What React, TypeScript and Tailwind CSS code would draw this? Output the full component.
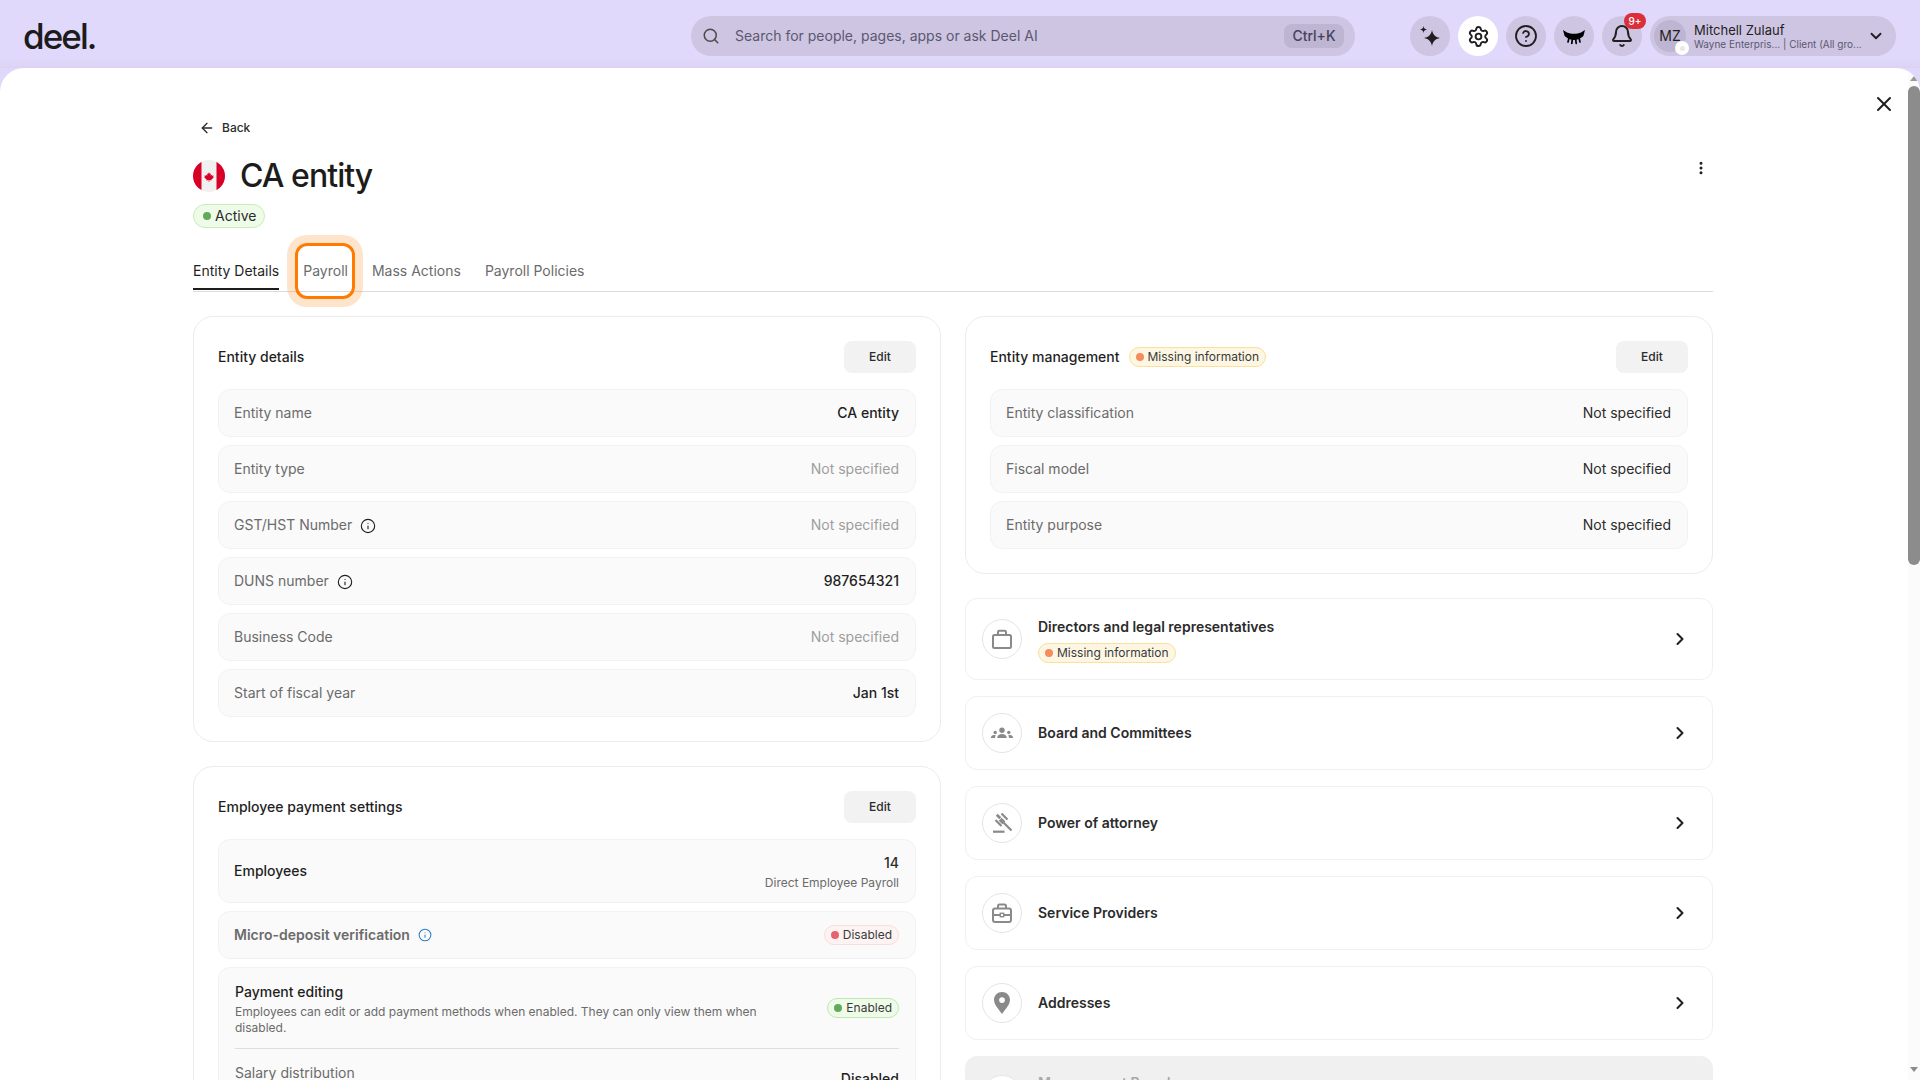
import React from "react";
import { ArrowLeft, X, EllipsisVertical, ChevronRight, ChevronDown, Search, Settings, CircleHelp, Bell, Info } from "lucide-react";

function Dot({ c }: { c: string }) {
  return <span className={`h-2 w-2 shrink-0 rounded-full ${c}`} />;
}

function MissingBadge() {
  return (
    <span className="inline-flex h-5 items-center gap-[4px] rounded-full border border-[#fbe09a] bg-[#fdf6e3] px-[6px] text-xs text-[#3a3a3a]">
      <span className="h-2 w-2 shrink-0 rounded-full bg-[#f58b5e]" />
      Missing information
    </span>
  );
}

function Row({ label, value, tone = "dark", info }: { label: string; value: string; tone?: "dark" | "dim" | "strong"; info?: boolean }) {
  return (
    <div className="flex h-12 items-center justify-between rounded-xl border border-[#f2f2f2] bg-[#fafafa] pl-[15px] pr-4 text-sm">
      <span className="flex items-center gap-2 text-[#6b6b6b]">
        {label}
        {info && <Info size={16} strokeWidth={1.7} className="mt-px text-[#222222]" />}
      </span>
      <span className={tone === "dim" ? "text-[#9e9e9e]" : tone === "strong" ? "font-medium text-[#1f1f1f]" : "text-[#2b2b2b]"}>{value}</span>
    </div>
  );
}

function EditButton() {
  return (
    <button className="h-8 w-[72px] rounded-lg bg-[#f2f2f2] text-xs font-medium text-[#2b2b2b]">Edit</button>
  );
}

function Case() {
  return (
    <svg width="24" height="24" viewBox="0 0 24 24" fill="none" stroke="#8a8a8a" strokeWidth="2">
      <rect x="3" y="8" width="18" height="13" rx="1.500" />
      <path d="M8 8V5c0-.8.5-1.300 1.300-1.300h5.400c.8 0 1.300.5 1.300 1.300v3" />
    </svg>
  );
}

function Board() {
  return (
    <svg width="24" height="24" viewBox="0 0 24 24" fill="#8a8a8a">
      <g transform="translate(0 1)">
        <circle cx="12" cy="8.200" r="2.700" />
        <path d="M7.200 16c.2-2.600 2-3.900 4.800-3.900s4.600 1.300 4.800 3.900z" />
        <circle cx="5.200" cy="10.500" r="1.700" />
        <path d="M.8 16c.2-1.900 1.300-3 3.200-3 .7 0 1.200.1 1.700.3-.4.800-.6 1.700-.7 2.700z" />
        <circle cx="18.800" cy="10.500" r="1.700" />
        <path d="M23.200 16c-.2-1.900-1.300-3-3.200-3-.7 0-1.200.1-1.700.3.4.8.6 1.700.7 2.700z" />
      </g>
    </svg>
  );
}

function Gavel() {
  return (
    <svg width="24" height="24" viewBox="0 0 24 24" fill="none" stroke="#8a8a8a" strokeWidth="2.200" strokeLinecap="butt">
      <path d="M11.500 2.500l6 6" />
      <path d="M5.500 9l6 6" />
      <path d="M9.500 4.500L7.500 6.500M13.500 8.500l-3 3" strokeWidth="5" />
      <path d="M13 11l8.500 8.500" />
      <path d="M3 20.700h11.500" />
    </svg>
  );
}

function Toolbox() {
  return (
    <svg width="24" height="24" viewBox="0 0 24 24" fill="none" stroke="#8a8a8a" strokeWidth="2">
      <rect x="3" y="7.500" width="18" height="13.500" rx="2" />
      <path d="M8 7.500V5c0-.9.600-1.500 1.500-1.500h5c.9 0 1.500.6 1.500 1.500v2.500" />
      <path d="M3 14h7M14 14h7" />
      <rect x="10.300" y="12.300" width="3.400" height="3.400" strokeWidth="1.400" />
    </svg>
  );
}

function Pin() {
  return (
    <svg width="24" height="24" viewBox="0 0 24 24" fill="#8a8a8a">
      <path fillRule="evenodd" d="M12 1C7.500 1 4 4.400 4 8.800c0 5 4.800 9.700 8 14.200 3.200-4.500 8-9.200 8-14.200C20 4.400 16.500 1 12 1zm0 5.200a2.900 2.900 0 1 1 0 5.800 2.900 2.900 0 0 1 0-5.800z" />
    </svg>
  );
}

function ListCard({ title, icon, missing, disabled }: { title: string; icon: React.ReactNode; missing?: boolean; disabled?: boolean }) {
  return (
    <div className={`flex items-center gap-4 rounded-xl border border-[#f0f0f0] px-4 ${disabled ? "bg-[#f0f0f0] pb-4 pt-[14px]" : "bg-white py-4"}`}>
      <div className="flex h-10 w-10 shrink-0 items-center justify-center rounded-full border border-[#e5e5e5] bg-white">{icon}</div>
      <div className="flex min-w-0 flex-1 flex-col items-start gap-1">
        <span className={`text-sm font-semibold leading-6 ${disabled ? "text-[#a8a8a8]" : "text-[#2b2b2b]"}`}>{title}</span>
        {missing && <MissingBadge />}
      </div>
      <ChevronRight size={20} strokeWidth={2.500} className="mr-[6px] text-[#222222]" />
    </div>
  );
}

function RoundIcon({ children, white }: { children: React.ReactNode; white?: boolean }) {
  return (
    <div className={`relative flex h-10 w-10 items-center justify-center rounded-full ${white ? "bg-white" : "bg-[#cdc5e2]"}`}>{children}</div>
  );
}

function Sparkle() {
  return (
    <svg width="26" height="26" viewBox="0 0 26 26" fill="#1f1f1f">
      <path d="M15 7c1 4.700 2.900 6.800 8 8-5.100 1.200-7 3.300-8 8-1-4.700-2.900-6.800-8-8 5.100-1.200 7-3.300 8-8z" />
      <path d="M6.500 3c.4 2.200 1.200 3 3.500 3.500C7.700 7 6.900 7.800 6.500 10c-.4-2.200-1.200-3-3.500-3.500C5.300 6 6.100 5.200 6.500 3z" />
    </svg>
  );
}

function ClosedEye() {
  return (
    <svg width="24" height="24" viewBox="0 0 24 24" fill="#000000" stroke="#000000" strokeWidth="0">
      <path d="M1 6l4 2.500c4 1.700 10 1.700 14 0L23 6l-1.600 6c-3 2.800-6 4-9.400 4s-6.400-1.200-9.400-4z" />
      <path d="M7 14L6 18M10.300 15.300L9.800 19.300M13.700 15.300l.5 4M17 14l1 4" fill="none" strokeWidth="1.700" strokeLinecap="round" />
    </svg>
  );
}

function Flag() {
  return (
    <svg width="32" height="32" viewBox="0 0 32 32" className="shrink-0">
      <defs>
        <clipPath id="flagclip"><circle cx="16" cy="16" r="16" /></clipPath>
      </defs>
      <g clipPath="url(#flagclip)">
        <rect width="32" height="32" fill="#f0f0f0" />
        <rect width="8.500" height="32" fill="#d80027" />
        <rect x="23.500" width="8.500" height="32" fill="#d80027" />
        <g transform="translate(16 16.500) scale(0.78) translate(-16 -16)">
          <path d="M16 10.500l1.300 2.300 1.300-.7-.6 3 1.600-1.200.5 1.200 1.800-.3-.6 1.900.9.500-3.200 2.600.4 1.200-3-.4v2.400h-.8v-2.400l-3 .4.400-1.200-3.200-2.600.9-.5-.6-1.900 1.800.3.500-1.200 1.600 1.200-.6-3 1.300.7z" fill="#d80027" />
        </g>
      </g>
    </svg>
  );
}

export default function App() {
  return (
    <div className="flex h-screen w-full flex-col overflow-hidden bg-[#e0d8fa] font-[Inter,sans-serif] text-[#1f1f1f]">
      <header className="relative flex h-[68px] shrink-0 items-start bg-[linear-gradient(to_bottom,#e1d9fb_0%,#e1d9fb_85%,#dcd3f4_100%)] pl-[23px] pr-6 pt-4">
        <div className="flex h-10 w-[668px] items-center text-[35px] font-medium leading-none tracking-[-0.055em] text-[#1c1c1c]">deel.</div>
        <div className="flex h-10 w-[664px] items-center rounded-full bg-[#cdc5e2] pl-[11px] pr-[11px]">
          <Search size={18} strokeWidth={2} className="text-[#4a4a4a]" />
          <span className="ml-[15px] flex-1 text-sm text-[#5c5870]">Search for people, pages, apps or ask Deel AI</span>
          <span className="flex h-6 w-[60px] items-center justify-center rounded-lg bg-[#bdb5d2] text-sm font-medium text-[#45425a]">Ctrl+K</span>
        </div>
        <div className="ml-[55px] flex items-center gap-2">
          <RoundIcon><Sparkle /></RoundIcon>
          <RoundIcon white><Settings size={23} strokeWidth={2} className="text-[#1f1f1f]" /></RoundIcon>
          <RoundIcon><CircleHelp size={24} strokeWidth={1.8} className="text-[#1f1f1f]" /></RoundIcon>
          <RoundIcon><ClosedEye /></RoundIcon>
          <RoundIcon>
            <Bell size={24} strokeWidth={2} className="text-[#1f1f1f]" />
            <span className="absolute left-[22px] top-[-3px] flex h-4 w-[22px] items-center justify-center rounded-full bg-[#dc2f3c] text-[10px] font-medium text-white">9+</span>
          </RoundIcon>
          <div className="flex h-10 w-[246px] items-center rounded-full bg-[#cdc5e2] pl-1 pr-[11px]">
            <div className="relative flex h-8 w-8 shrink-0 items-center justify-center rounded-full bg-[#bdb5d2] text-sm text-[#1f1f1f]">
              MZ
              <span className="absolute left-[21px] top-[21px] flex h-[14px] w-[14px] items-center justify-center rounded-full bg-white">
                <span className="h-[5px] w-[5px] rounded-full bg-[#e8e8e8]" />
              </span>
            </div>
            <div className="ml-2 flex min-w-0 flex-1 flex-col justify-center leading-none">
              <span className="text-[13px] leading-4 text-[#1f1f1f]">Mitchell Zulauf</span>
              <span className="-mt-px whitespace-nowrap text-[10px] leading-[14px] text-[#5c5870]">Wayne Enterpris... | Client (All gro...</span>
            </div>
            <ChevronDown size={18} strokeWidth={2.500} className="text-[#1f1f1f]" />
          </div>
        </div>
      </header>

      <div className="flex h-[1012px] overflow-hidden rounded-t-[24px] bg-white">
        <main className="relative min-w-0 flex-1 pl-[193px] pt-[48px]">
          <X size={24} strokeWidth={2} className="absolute left-[1872px] top-[24px] text-[#1f1f1f]" />
          <EllipsisVertical size={16} strokeWidth={2.500} className="absolute left-[1693px] top-[92px] text-[#1f1f1f]" />
          <div className="w-[1520px]">
            <div className="flex h-6 items-center pl-[6px] text-xs font-medium text-[#2b2b2b]">
              <ArrowLeft size={16} strokeWidth={2} className="mr-[7px]" />
              Back
            </div>
            <div className="mt-5 flex h-8 items-center gap-[15px]">
              <Flag />
              <h1 className="text-[32px] font-medium leading-8 tracking-[-0.03em] text-[#1c1c1c]">CA entity</h1>
            </div>
            <div className="mt-3 flex">
              <span className="inline-flex h-6 items-center gap-[4px] rounded-full border border-[#c8ecba] bg-[#effbe9] pl-[9px] pr-2 text-sm text-[#2b2b2b]">
                <Dot c="bg-[#62a95c]" />
                Active
              </span>
            </div>
            <div className="mt-6 flex h-10 gap-6 border-b border-[#dcdcdc] text-sm text-[#6b6b6b]">
              <div className="flex h-[38px] items-center border-b-2 border-[#1c1c1c] pt-[2px] text-[#1f1f1f]">Entity Details</div>
              <div className="relative flex h-[38px] items-center">
                Payroll
                <span className="absolute left-[-8px] top-[-9px] h-[56px] w-[60px] rounded-xl border-[3px] border-[#ff7a00] shadow-[0_0_0_8px_rgba(255,122,0,0.2)]" />
              </div>
              <div className="flex h-[38px] items-center">Mass Actions</div>
              <div className="flex h-[38px] items-center">Payroll Policies</div>
            </div>

            <div className="mt-6 grid grid-cols-2 items-start gap-6">
              <div className="flex flex-col gap-6">
                <section className="rounded-[20px] border border-[#ececec] p-6">
                  <div className="mb-4 flex items-center justify-between">
                    <h2 className="text-sm font-medium text-[#1f1f1f]">Entity details</h2>
                    <EditButton />
                  </div>
                  <div className="flex flex-col gap-2">
                    <Row label="Entity name" value="CA entity" tone="strong" />
                    <Row label="Entity type" value="Not specified" tone="dim" />
                    <Row label="GST/HST Number" value="Not specified" tone="dim" info />
                    <Row label="DUNS number" value="987654321" tone="strong" info />
                    <Row label="Business Code" value="Not specified" tone="dim" />
                    <Row label="Start of fiscal year" value="Jan 1st" tone="strong" />
                  </div>
                </section>

                <section className="rounded-[20px] border border-[#ececec] p-6">
                  <div className="mb-4 flex items-center justify-between">
                    <h2 className="text-sm font-medium text-[#1f1f1f]">Employee payment settings</h2>
                    <EditButton />
                  </div>
                  <div className="flex flex-col gap-2">
                    <div className="flex h-16 items-center justify-between rounded-xl border border-[#f2f2f2] bg-[#fafafa] pl-[15px] pr-4">
                      <span className="text-sm font-medium text-[#1f1f1f]">Employees</span>
                      <div className="mt-[3px] flex flex-col items-end">
                        <span className="text-sm font-medium leading-5 text-[#2b2b2b]">14</span>
                        <span className="text-xs leading-5 text-[#6b6b6b]">Direct Employee Payroll</span>
                      </div>
                    </div>
                    <div className="flex h-12 items-center justify-between rounded-xl border border-[#f2f2f2] bg-[#fafafa] pl-[15px] pr-4">
                      <span className="flex items-center gap-2 text-sm font-semibold text-[#6b6b6b]">
                        Micro-deposit verification
                        <Info size={14} strokeWidth={1.8} className="text-[#2a7fc4]" />
                      </span>
                      <span className="inline-flex h-5 items-center gap-[4px] rounded-full border border-[#fbdcdc] bg-[#fdf3f3] px-[6px] text-xs text-[#3a3a3a]">
                        <Dot c="bg-[#e5636e]" />
                        Disabled
                      </span>
                    </div>
                    <div className="rounded-xl border border-[#f2f2f2] bg-[#fafafa] px-4 pt-[14px]">
                      <div className="flex items-start justify-between border-b border-[#dedede] pb-[12px]">
                        <div className="w-[560px]">
                          <div className="text-sm font-medium leading-5 text-[#1f1f1f]">Payment editing</div>
                          <div className="mt-[2px] text-xs leading-4 text-[#6b6b6b]">Employees can edit or add payment methods when enabled. They can only view them when disabled.</div>
                        </div>
                        <span className="mt-4 inline-flex h-5 items-center gap-[4px] rounded-full border border-[#bfe8b0] bg-[#effbe9] px-[6px] text-xs text-[#3a3a3a]">
                          <Dot c="bg-[#62a95c]" />
                          Enabled
                        </span>
                      </div>
                      <div className="flex h-16 items-start justify-between pt-[14px] text-sm">
                        <span className="leading-5 text-[#6b6b6b]">Salary distribution</span>
                        <span className="mt-[6px] font-medium text-[#1f1f1f]">Disabled</span>
                      </div>
                    </div>
                  </div>
                </section>
              </div>

              <div className="flex flex-col">
                <section className="rounded-[20px] border border-[#ececec] p-6">
                  <div className="mb-4 flex items-center justify-between">
                    <div className="flex items-center gap-[9px]">
                      <h2 className="text-sm font-medium text-[#1f1f1f]">Entity management</h2>
                      <MissingBadge />
                    </div>
                    <EditButton />
                  </div>
                  <div className="flex flex-col gap-2">
                    <Row label="Entity classification" value="Not specified" />
                    <Row label="Fiscal model" value="Not specified" />
                    <Row label="Entity purpose" value="Not specified" />
                  </div>
                </section>
                <div className="mt-6 flex flex-col gap-4">
                  <ListCard title="Directors and legal representatives" missing icon={<Case />} />
                  <ListCard title="Board and Committees" icon={<Board />} />
                  <ListCard title="Power of attorney" icon={<Gavel />} />
                  <ListCard title="Service Providers" icon={<Toolbox />} />
                  <ListCard title="Addresses" icon={<Pin />} />
                  <ListCard title="Management Boards" disabled missing icon={<span />} />
                </div>
              </div>
            </div>
          </div>
        </main>
        <aside className="flex w-3 shrink-0 flex-col items-center bg-[#fbfbfb]">
          <div className="mt-[8px] h-0 w-0 border-x-[4px] border-b-[5px] border-x-transparent border-b-[#9a9a9a]" />
          <div className="mt-[5px] h-[479px] w-full rounded-[6px] bg-[#8c8c8c]" />
          <div className="mb-[8px] mt-auto h-0 w-0 border-x-[4px] border-t-[5px] border-x-transparent border-t-[#8c8c8c]" />
        </aside>
      </div>
    </div>
  );
}
